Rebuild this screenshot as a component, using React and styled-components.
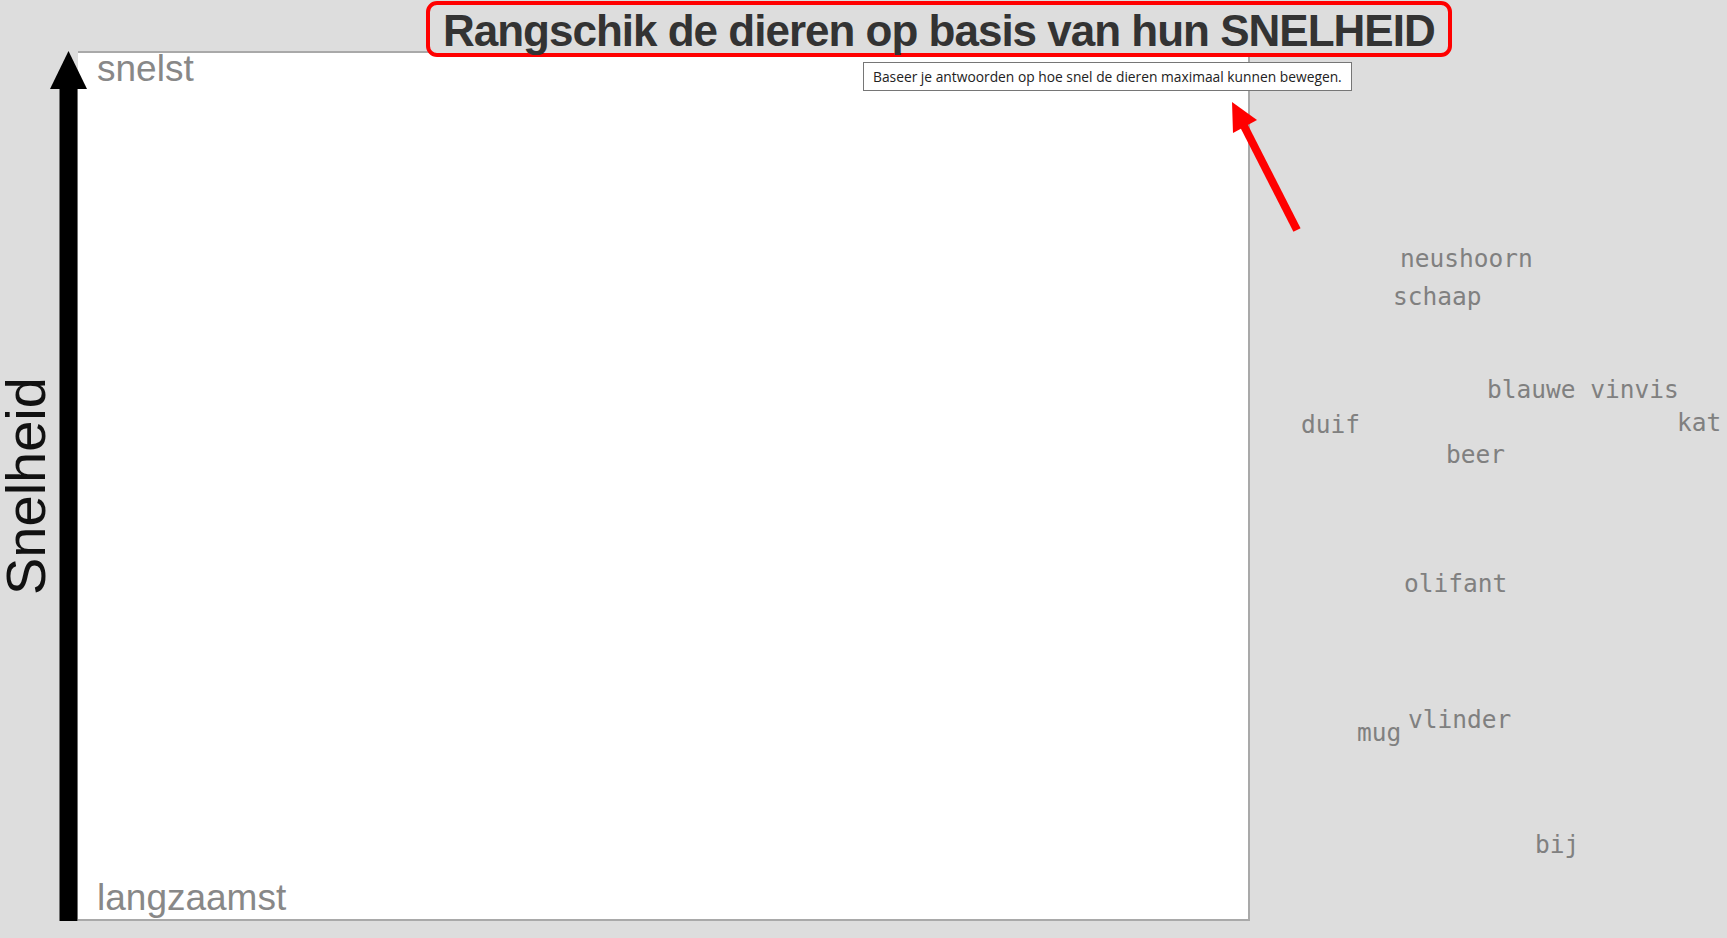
import React from "react";
import styled, { createGlobalStyle } from "styled-components";

const GlobalStyle = createGlobalStyle`
  html, body {
    margin: 0;
    padding: 0;
    background: #dddddd;
  }
  body {
    font-family: "Liberation Sans", Arial, sans-serif;
    overflow: hidden;
  }
`;

// animal cards that still wait to be dragged onto the board
const animals = [
  { name: "neushoorn", x: 150, y: 196 },
  { name: "schaap", x: 143, y: 234 },
  { name: "blauwe vinvis", x: 237, y: 327 },
  { name: "duif", x: 51, y: 362 },
  { name: "kat", x: 427, y: 360 },
  { name: "beer", x: 196, y: 392 },
  { name: "olifant", x: 154, y: 521 },
  { name: "vlinder", x: 158, y: 657 },
  { name: "mug", x: 107, y: 670 },
  { name: "bij", x: 285, y: 782 },
];

const App = () => {
  return (
    <Page>
      <GlobalStyle />
      <TitleRow>
        <TitleBox>Rangschik de dieren op basis van hun SNELHEID</TitleBox>
      </TitleRow>

      <Main>
        <AxisLabel>Snelheid</AxisLabel>
        <AxisArrow width="37" height="870" viewBox="0 0 37 870">
          <polygon points="18.5,0 37,38 0,38" fill="#000" />
          <rect x="9.5" y="36" width="18" height="834" fill="#000" />
        </AxisArrow>

        <Board>
          <EndLabel $top>snelst</EndLabel>
          <EndLabel>langzaamst</EndLabel>
        </Board>

        <Tray>
          {animals.map((a) => (
            <Word key={a.name} style={{ left: a.x, top: a.y }}>
              {a.name}
            </Word>
          ))}
        </Tray>
      </Main>

      <Hint>Baseer je antwoorden op hoe snel de dieren maximaal kunnen bewegen.</Hint>

      {/* red pointer towards the hint */}
      <Pointer width="90" height="145" viewBox="1220 95 90 145">
        <line x1="1297" y1="230" x2="1244" y2="126" stroke="#ff0000" strokeWidth="8" />
        <polygon points="1232,102 1257,120 1233,133" fill="#ff0000" />
      </Pointer>
    </Page>
  );
};

//Styled components

const Page = styled.div`
  position: relative;
  width: 1727px;
  height: 938px;
  background: #dddddd;
`;

const TitleRow = styled.div`
  display: flex;
  padding: 1px 0 0 426px;
`;

const TitleBox = styled.h1`
  position: relative;
  z-index: 2;
  margin: 0;
  padding: 3px 13px 0;
  border: 4px solid #ff0000;
  border-radius: 11px;
  background: #dddddd;
  color: #333333;
  font-family: "Liberation Sans", Arial, sans-serif;
  font-weight: bold;
  font-size: 44px;
  letter-spacing: -1px;
  line-height: 45px;
  white-space: nowrap;
`;

const Main = styled.div`
  display: flex;
  height: 870px;
  margin-top: -6px;
`;

const AxisLabel = styled.div`
  flex: none;
  width: 52px;
  margin-right: -2px;
  display: flex;
  align-items: center;
  justify-content: center;
  writing-mode: vertical-rl;
  transform: rotate(180deg);
  font-size: 56px;
  line-height: 52px;
  color: #111111;
`;

const AxisArrow = styled.svg`
  flex: none;
  position: relative;
  z-index: 1;
  margin-right: -9px;
`;

const Board = styled.div`
  flex: none;
  width: 1151px;
  display: flex;
  flex-direction: column;
  justify-content: space-between;
  padding: 0 0 3px 19px;
  background: #ffffff;
  border: 2px solid #a9a9a9;
  border-left: none;
`;

const EndLabel = styled.div`
  font-size: 37px;
  line-height: 37px;
  color: #888888;
  margin-top: ${(p) => (p.$top ? "-3px" : "0")};
`;

const Tray = styled.div`
  position: relative;
  flex: 1;
`;

const Word = styled.span`
  position: absolute;
  font-family: "DejaVu Sans Mono", "Liberation Mono", monospace;
  font-size: 24.5px;
  line-height: 24px;
  color: #808080;
  white-space: nowrap;
`;

const Hint = styled.div`
  position: absolute;
  left: 863px;
  top: 62px;
  z-index: 3;
  padding: 5px 9px 5px 9px;
  background: #ffffff;
  border: 1px solid #767676;
  font-family: "Open Sans", sans-serif;
  font-size: 13.8px;
  line-height: 17px;
  color: #222222;
  white-space: nowrap;
`;

const Pointer = styled.svg`
  position: absolute;
  left: 1220px;
  top: 95px;
  z-index: 3;
`;

export default App;
